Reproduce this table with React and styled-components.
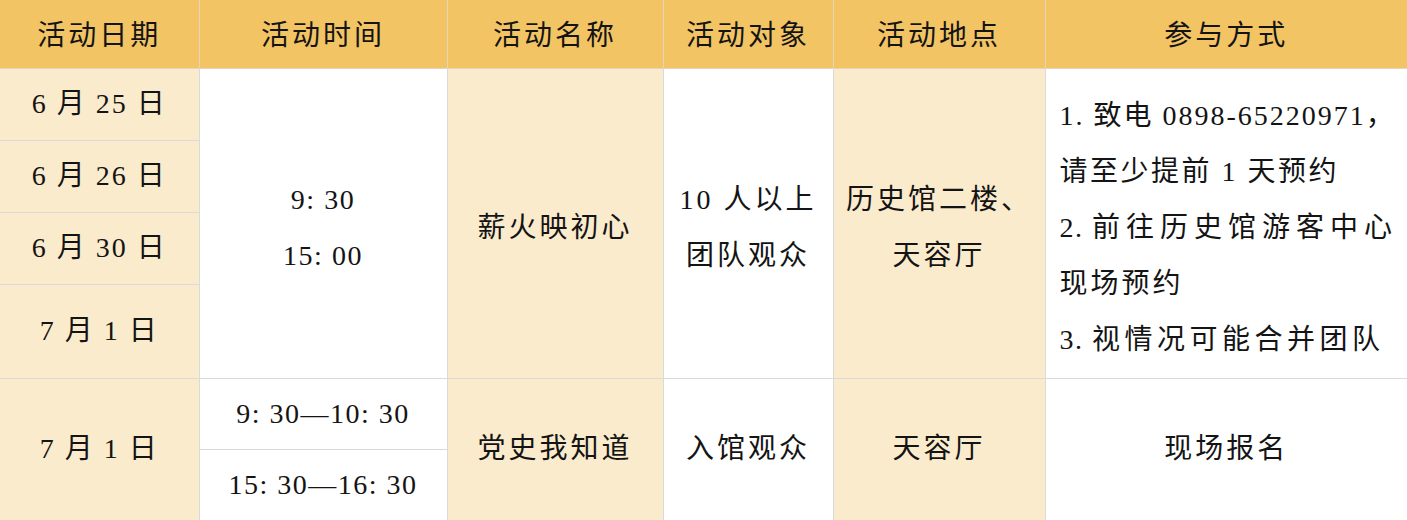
import React from "react"
import styled, { createGlobalStyle } from "styled-components"

const GlobalStyle = createGlobalStyle`
  html, body {
    margin: 0;
    padding: 0;
    background: #ffffff;
    overflow: hidden;
  }
`

const Table = styled.table`
  width: 1407px;
  table-layout: fixed;
  border-collapse: collapse;
  border-style: hidden;
  font-family: "Liberation Serif", "Noto Sans CJK SC", serif;
  font-size: 28px;
  color: #141414;
`

const Row = styled.tr`
  height: ${props => props.h}px;
`

const Head = styled.th`
  background: #f2c464;
  border: 1px solid #e3d6bd;
  font-weight: 400;
  letter-spacing: 3px;
  text-align: center;
  vertical-align: middle;
  padding: 0 0 2px;
`

const Cell = styled.td`
  background: ${props => (props.cream ? "#fbebcd" : "#ffffff")};
  border: 1px solid #dadada;
  text-align: ${props => (props.left ? "left" : "center")};
  vertical-align: middle;
  letter-spacing: ${props => props.spacing || 3}px;
  line-height: 56px;
  padding: ${props => (props.tall ? "10px" : "0")} 0 0
    ${props => (props.left ? "14px" : "0")};
  white-space: nowrap;
  overflow: hidden;
`

const Line = styled.div`
  letter-spacing: ${props => props.spread || 3}px;
`

const Num = styled.span`
  letter-spacing: 1.5px;
`

const widths = [199, 248, 216, 170, 212, 362]
const heads = ["活动日期", "活动时间", "活动名称", "活动对象", "活动地点", "参与方式"]
const dates = [
  ["6 月 25 日", 72],
  ["6 月 26 日", 72],
  ["6 月 30 日", 72],
  ["7 月 1 日", 94],
]

const App = () => (
  <>
    <GlobalStyle />
    <Table>
      <colgroup>
        {widths.map((w, i) => (
          <col key={i} style={{ width: w }} />
        ))}
      </colgroup>
      <thead>
        <Row h={68}>
          {heads.map(h => (
            <Head key={h}>{h}</Head>
          ))}
        </Row>
      </thead>
      <tbody>
        {dates.map(([d, h], i) => (
          <Row key={d} h={h}>
            <Cell cream spacing={2}>{d}</Cell>
            {i === 0 && (
              <>
                <Cell rowSpan={4} tall spacing={1.5}>
                  <Line spread={1.5}>9: 30</Line>
                  <Line spread={1.5}>15: 00</Line>
                </Cell>
                <Cell rowSpan={4} cream tall>薪火映初心</Cell>
                <Cell rowSpan={4} tall>
                  <Line>10 人以上</Line>
                  <Line>团队观众</Line>
                </Cell>
                <Cell rowSpan={4} cream tall>
                  <Line>历史馆二楼、</Line>
                  <Line>天容厅</Line>
                </Cell>
                <Cell rowSpan={4} left tall>
                  <Line spread={2}>1. 致电 0898-65220971，</Line>
                  <Line spread={2.5}>请至少提前 1 天预约</Line>
                  <Line spread={6}>
                    <Num>2. </Num>前往历史馆游客中心
                  </Line>
                  <Line>现场预约</Line>
                  <Line spread={4.5}>
                    <Num>3. </Num>视情况可能合并团队
                  </Line>
                </Cell>
              </>
            )}
          </Row>
        ))}
        <Row h={71}>
          <Cell rowSpan={2} cream spacing={2}>7 月 1 日</Cell>
          <Cell spacing={1.5}>9: 30—10: 30</Cell>
          <Cell rowSpan={2} cream>党史我知道</Cell>
          <Cell rowSpan={2}>入馆观众</Cell>
          <Cell rowSpan={2} cream>天容厅</Cell>
          <Cell rowSpan={2}>现场报名</Cell>
        </Row>
        <Row h={71}>
          <Cell spacing={1.5}>15: 30—16: 30</Cell>
        </Row>
      </tbody>
    </Table>
  </>
)

export default App
